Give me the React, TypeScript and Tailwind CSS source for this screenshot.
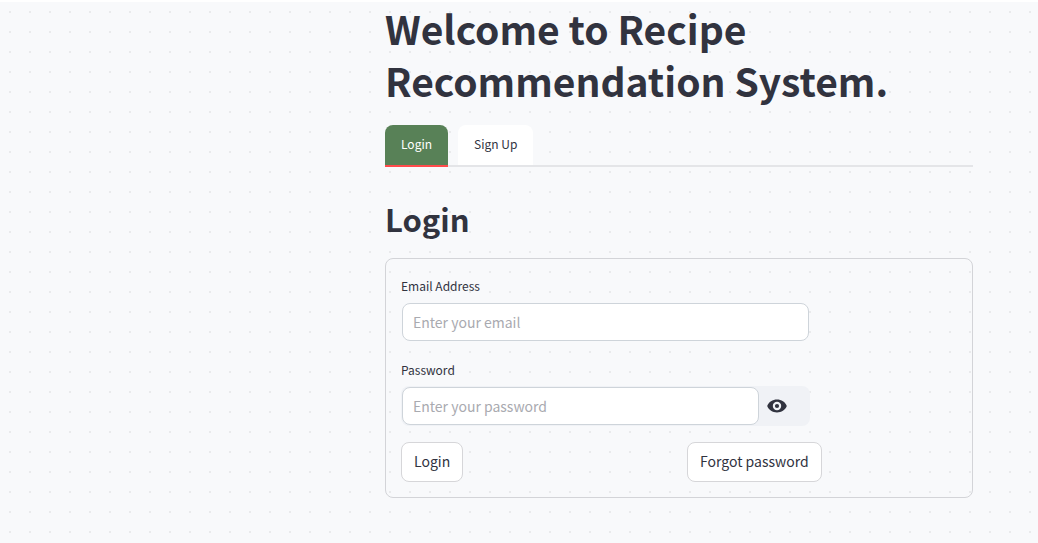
import { useState } from "react";
import type { FormEvent } from "react";

type Tab = "login" | "signup";

const fieldClass =
  "h-[38px] min-w-0 flex-1 rounded-lg border border-[#ced4da] bg-white px-2.5 text-[14px] leading-6 text-[#31333f] outline-none placeholder:text-[#a9aab0] placeholder:opacity-100";
const buttonClass =
  "h-10 cursor-pointer rounded-lg border border-[#d6d6d9] bg-white px-3 pb-0.5 text-[14px] leading-6 text-[#31333f]";
const labelClass = "text-[12px] leading-5 text-[#31333f]";
const tabClass =
  "cursor-pointer rounded-t-lg bg-white px-4 pb-0.5 text-[12px] -mb-0.5 h-[42px] border-b-2 border-[#e4e5e8] aria-selected:border-[#ff4b4b] aria-selected:bg-[#588157] aria-selected:text-white";

function EyeIcon() {
  return (
    <svg viewBox="0 0 20 20" className="size-5" fill="currentColor" aria-hidden="true">
      <path
        fillRule="evenodd"
        d="M10 3.6C5.6 3.6 1.8 6 .2 10c1.6 4 5.400 6.400 9.800 6.400s8.200-2.400 9.800-6.400C18.200 6 14.400 3.600 10 3.600zM10 14.200a4.200 4.200 0 1 1 0-8.400 4.200 4.200 0 0 1 0 8.400zM10 7.900a2.100 2.100 0 1 0 0 4.200 2.100 2.100 0 0 0 0-4.200z"
      />
    </svg>
  );
}

export default function App() {
  const [tab, setTab] = useState<Tab>("login");
  const [visible, setVisible] = useState(false);
  const title = tab === "login" ? "Login" : "Sign Up";

  return (
    <div className="bg-white pt-0.5 font-['Noto_Sans_CJK_SC','Noto_Sans',sans-serif] text-[#31333f]">
      <div className="flex min-h-[calc(100vh-2px)] bg-[#f8f9fb] bg-[radial-gradient(#e9eaec_1px,transparent_1px)] bg-[size:20px_20px]">
        <div className="w-80 shrink-0" />
        <main className="min-w-0 flex-1 px-[65px] pb-10">
          <h1 className="text-[39px] leading-[52px] font-bold">Welcome to Recipe Recommendation System.</h1>

          <div role="tablist" className="mt-[19px] flex gap-2.5 border-b-2 border-[#e4e5e8]">
            <button
              type="button"
              role="tab"
              aria-selected={tab === "login"}
              onClick={() => setTab("login")}
              className={tabClass}
            >
              Login
            </button>
            <button
              type="button"
              role="tab"
              aria-selected={tab === "signup"}
              onClick={() => setTab("signup")}
              className={tabClass}
            >
              Sign Up
            </button>
          </div>

          <h2 className="mt-[30px] text-[31px] leading-[44px] font-bold">{title}</h2>

          <form
            className="mt-[17px] rounded-lg border border-[#d3d4d8] px-[15px] pt-[17px] pb-[15px]"
            onSubmit={(event: FormEvent) => event.preventDefault()}
          >
            <div className="flex max-w-[409px] flex-col gap-1.5">
              <label htmlFor="email" className={labelClass}>
                Email Address
              </label>
              <div className="flex items-center p-px">
                <input id="email" type="email" placeholder="Enter your email" className={fieldClass} />
              </div>
            </div>

            <div className="mt-[18px] flex max-w-[409px] flex-col gap-1.5">
              <label htmlFor="password" className={labelClass}>
                Password
              </label>
              <div className="flex items-center rounded-lg bg-[#f0f2f6] p-px">
                <input
                  id="password"
                  type={visible ? "text" : "password"}
                  placeholder="Enter your password"
                  className={fieldClass}
                />
                <button
                  type="button"
                  aria-label="Show password text"
                  onClick={() => setVisible(!visible)}
                  className="w-[50px] shrink-0 cursor-pointer pl-2"
                >
                  <EyeIcon />
                </button>
              </div>
            </div>

            <div className="mt-4 grid grid-cols-2 gap-4">
              <div>
                <button type="submit" className={buttonClass}>
                  Login
                </button>
              </div>
              <div>
                <button type="button" className={buttonClass}>
                  Forgot password
                </button>
              </div>
            </div>
          </form>
        </main>
      </div>
    </div>
  );
}
